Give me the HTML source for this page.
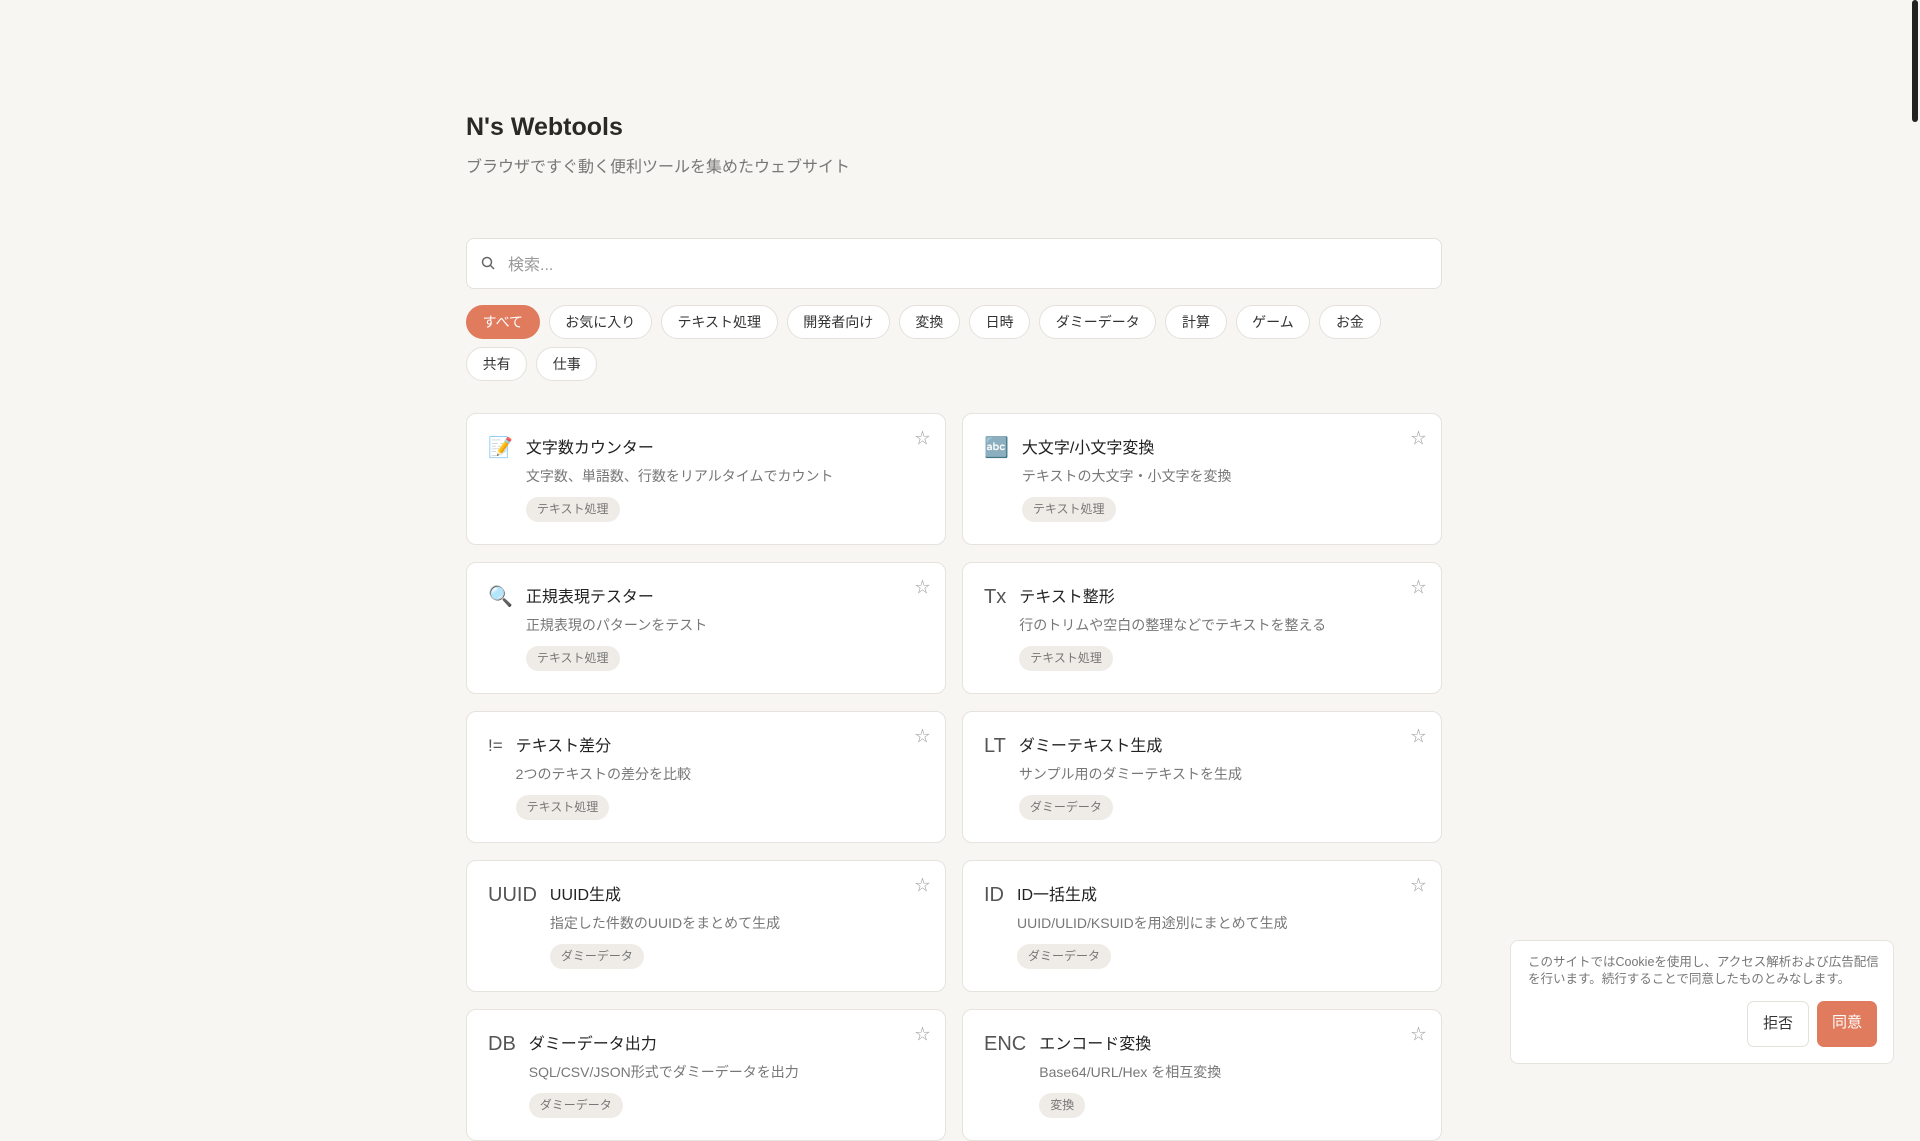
<!DOCTYPE html>
<html><head><meta charset="utf-8"><style>
*{box-sizing:border-box;margin:0;padding:0}
body{width:1920px;height:1080px;overflow:hidden;background:#f7f6f2;font-family:"Liberation Sans","Noto Sans CJK JP",sans-serif;color:#2a2a2a;position:relative}
.wrap{position:absolute;left:466px;top:0;width:976px}
h1{position:absolute;top:112px;font-size:25px;font-weight:700;color:#2b2926;line-height:30px}
.sub{position:absolute;top:157px;font-size:16px;color:#777;line-height:22px;white-space:nowrap}
.search{position:absolute;top:238px;left:0;width:976px;height:51px;background:#fff;border:1px solid #e4e1db;border-radius:8px}
.search span{position:absolute;left:41px;top:12px;font-size:16px;color:#999}
.search svg{position:absolute;left:14px;top:17px}
.chips{position:absolute;top:305px;left:0;width:976px;display:flex;flex-wrap:wrap;gap:8px 9px}
.chip{height:34px;line-height:32px;padding:0 15.6px;border:1px solid #e4e1db;border-radius:17px;background:#fff;font-size:14px;color:#333}
.chip.on{background:#e07b5d;border-color:#e07b5d;color:#fff}
.card{position:absolute;width:480px;height:132px;background:#fff;border:1px solid #e6e3dd;border-radius:10px;padding:20px 20px 0 21px;display:flex}
.ic{font-size:20px;color:#555;margin-right:13px;line-height:28px;white-space:nowrap}
.t{font-size:16px;color:#222;line-height:24px;margin-top:3px}
.d{font-size:14px;color:#777;line-height:20px;margin-top:5px;white-space:nowrap}
.tag{display:inline-block;margin-top:11px;height:25px;line-height:25px;padding:0 11px;background:#efece7;border-radius:13px;font-size:12px;color:#777}
.star{position:absolute;right:15px;top:13px;font-size:15px;color:#999}
.cookie{position:absolute;left:1510px;top:940px;width:384px;height:124px;background:#fff;border:1px solid #e6e3dd;border-radius:8px}
.cookie p{position:absolute;left:17px;top:13px;font-size:12.5px;color:#777;line-height:17px;width:360px}
.btn{position:absolute;top:60px;height:46px;line-height:44px;font-size:15px;border-radius:7px;text-align:center}
.scroll{position:absolute;right:2px;top:0;width:6px;height:122px;background:#222;border-radius:3px}
</style></head><body>
<div class="wrap">
<h1>N's Webtools</h1>
<div class="sub">ブラウザですぐ動く便利ツールを集めたウェブサイト</div>
<div class="search"><svg width="14" height="14" viewBox="0 0 14 14"><circle cx="6" cy="6" r="4.5" fill="none" stroke="#666" stroke-width="1.5"/><path d="M9.5 9.5L13 13" stroke="#666" stroke-width="1.5"/></svg><span>検索...</span></div>
<div class="chips"><div class="chip on">すべて</div><div class="chip">お気に入り</div><div class="chip">テキスト処理</div><div class="chip">開発者向け</div><div class="chip">変換</div><div class="chip">日時</div><div class="chip">ダミーデータ</div><div class="chip">計算</div><div class="chip">ゲーム</div><div class="chip">お金</div><div class="chip">共有</div><div class="chip">仕事</div></div>
</div>

<div class="card" style="left:466px;top:413px"><div class="ic">📝</div><div><div class="t">文字数カウンター</div><div class="d">文字数、単語数、行数をリアルタイムでカウント</div><div class="tag">テキスト処理</div></div><div class="star">☆</div></div>
<div class="card" style="left:962px;top:413px"><div class="ic">🔤</div><div><div class="t">大文字/小文字変換</div><div class="d">テキストの大文字・小文字を変換</div><div class="tag">テキスト処理</div></div><div class="star">☆</div></div>
<div class="card" style="left:466px;top:562px"><div class="ic">🔍</div><div><div class="t">正規表現テスター</div><div class="d">正規表現のパターンをテスト</div><div class="tag">テキスト処理</div></div><div class="star">☆</div></div>
<div class="card" style="left:962px;top:562px"><div class="ic">Tx</div><div><div class="t">テキスト整形</div><div class="d">行のトリムや空白の整理などでテキストを整える</div><div class="tag">テキスト処理</div></div><div class="star">☆</div></div>
<div class="card" style="left:466px;top:711px"><div class="ic" style="font-size:17px">!=</div><div><div class="t">テキスト差分</div><div class="d">2つのテキストの差分を比較</div><div class="tag">テキスト処理</div></div><div class="star">☆</div></div>
<div class="card" style="left:962px;top:711px"><div class="ic">LT</div><div><div class="t">ダミーテキスト生成</div><div class="d">サンプル用のダミーテキストを生成</div><div class="tag">ダミーデータ</div></div><div class="star">☆</div></div>
<div class="card" style="left:466px;top:860px"><div class="ic">UUID</div><div><div class="t">UUID生成</div><div class="d">指定した件数のUUIDをまとめて生成</div><div class="tag">ダミーデータ</div></div><div class="star">☆</div></div>
<div class="card" style="left:962px;top:860px"><div class="ic">ID</div><div><div class="t">ID一括生成</div><div class="d">UUID/ULID/KSUIDを用途別にまとめて生成</div><div class="tag">ダミーデータ</div></div><div class="star">☆</div></div>
<div class="card" style="left:466px;top:1009px"><div class="ic">DB</div><div><div class="t">ダミーデータ出力</div><div class="d">SQL/CSV/JSON形式でダミーデータを出力</div><div class="tag">ダミーデータ</div></div><div class="star">☆</div></div>
<div class="card" style="left:962px;top:1009px"><div class="ic">ENC</div><div><div class="t">エンコード変換</div><div class="d">Base64/URL/Hex を相互変換</div><div class="tag">変換</div></div><div class="star">☆</div></div>

<div class="cookie"><p>このサイトではCookieを使用し、アクセス解析および広告配信を行います。続行することで同意したものとみなします。</p>
<div class="btn" style="left:236px;width:62px;background:#fff;border:1px solid #e4e1db;color:#333">拒否</div>
<div class="btn" style="left:306px;width:60px;background:#e07b5d;color:#fff">同意</div></div>
<div class="scroll"></div>
</body></html>
